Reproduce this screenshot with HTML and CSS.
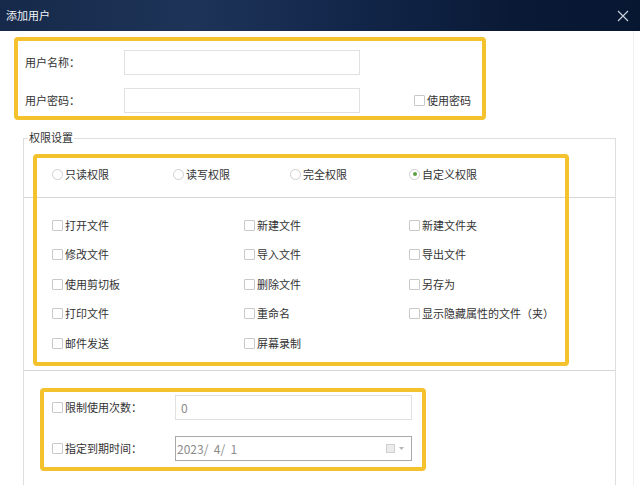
FILE: index.html
```html
<!DOCTYPE html>
<html lang="zh-CN">
<head>
<meta charset="utf-8">
<title>添加用户</title>
<link rel="stylesheet" href="styles.css">
</head>
<body>
<div class="window">
  <div class="titlebar">
    <span class="title">添加用户</span>
    <svg class="close" width="12" height="12" viewBox="0 0 12 12"><path d="M1 1 L11 11 M11 1 L1 11" stroke="#c8d0dc" stroke-width="1.2" fill="none"/></svg>
  </div>
  <div class="body">
    <div class="account hl">
      <span class="lbl">用户名称：</span>
      <div class="input"></div>
      <span></span>
      <span class="lbl">用户密码：</span>
      <div class="input"></div>
      <span class="opt pwd"><i class="cb"></i>使用密码</span>
    </div>

    <div class="group">
      <span class="group-title">权限设置</span>
      <div class="radios">
        <span class="opt"><i class="rd"></i>只读权限</span>
        <span class="opt"><i class="rd"></i>读写权限</span>
        <span class="opt"><i class="rd"></i>完全权限</span>
        <span class="opt"><i class="rd on"></i>自定义权限</span>
      </div>
      <div class="checks">
        <span class="opt"><i class="cb"></i>打开文件</span>
        <span class="opt"><i class="cb"></i>新建文件</span>
        <span class="opt"><i class="cb"></i>新建文件夹</span>
        <span class="opt"><i class="cb"></i>修改文件</span>
        <span class="opt"><i class="cb"></i>导入文件</span>
        <span class="opt"><i class="cb"></i>导出文件</span>
        <span class="opt"><i class="cb"></i>使用剪切板</span>
        <span class="opt"><i class="cb"></i>删除文件</span>
        <span class="opt"><i class="cb"></i>另存为</span>
        <span class="opt"><i class="cb"></i>打印文件</span>
        <span class="opt"><i class="cb"></i>重命名</span>
        <span class="opt"><i class="cb"></i>显示隐藏属性的文件（夹）</span>
        <span class="opt"><i class="cb"></i>邮件发送</span>
        <span class="opt"><i class="cb"></i>屏幕录制</span>
      </div>
      <div class="limits hl">
        <span class="opt"><i class="cb"></i>限制使用次数：</span>
        <div class="input value">0</div>
        <span class="opt"><i class="cb"></i>指定到期时间：</span>
        <div class="input date">
          <span class="value">2023/&nbsp; 4/&nbsp; 1</span>
          <span class="picker"><i class="cal"></i><svg width="5" height="3" viewBox="0 0 5 3"><path d="M0 0 H5 L2.5 3 Z" fill="#b5b5b5"/></svg></span>
        </div>
      </div>
      <div class="hl-overlay"></div>
    </div>
  </div>
</div>
</body>
</html>
```

FILE: styles.css
```css
* { box-sizing: border-box; }
html, body { margin: 0; padding: 0; background: #fff; }
body {
  font-family: "Noto Sans CJK SC", "Noto Sans", sans-serif;
  font-size: 11px;
  line-height: 1;
  color: #333;
}
.window {
  width: 640px;
  height: 485px;
  overflow: hidden;
  background: #fff;
}
.titlebar {
  height: 31px;
  display: flex;
  align-items: center;
  justify-content: space-between;
  padding: 0 11px 0 6px;
  background: linear-gradient(90deg, #16294a 0%, #1d3458 30%, #12264a 55%, #0a1a36 80%, #071631 100%);
}
.title { color: #f2f4f8; font-size: 11px; }
.close { display: block; }

.body {
  position: relative;
  padding-top: 6px;
  height: 454px;
  border-right: 1px solid #f0f0f0;
  margin-right: 6px;
}

.hl { border: 4px solid #f4c22c; border-radius: 4px; }

.account {
  margin-left: 14px;
  width: 472px;
  height: 83px;
  padding: 9px 0 3px 7px;
  display: grid;
  grid-template-columns: 99px 236px auto;
  grid-template-rows: 25px 25px;
  row-gap: 13px;
  align-items: center;
}
.lbl { font-size: 11px; }
.input {
  height: 25px;
  border: 1px solid #e1e1e1;
  background: #fff;
}
.pwd { margin-left: 54px; }

.opt { display: inline-flex; align-items: center; white-space: nowrap; }
.cb {
  display: inline-block;
  width: 11px;
  height: 11px;
  border: 1px solid #c9c9c9;
  border-radius: 1px;
  background: #fff;
  margin-right: 2px;
}
.rd {
  display: inline-block;
  width: 11px;
  height: 11px;
  border: 1px solid #cfcfcf;
  border-radius: 50%;
  background: #fff;
  margin-right: 2px;
  position: relative;
}
.rd.on::after {
  content: "";
  position: absolute;
  left: 2.5px;
  top: 2.5px;
  width: 4px;
  height: 4px;
  border-radius: 50%;
  background: #5f9f45;
}

.group {
  position: relative;
  margin: 18px 0 0 23px;
  width: 593px;
  border: 1px solid #dedede;
  border-bottom: none;
  padding-bottom: 30px;
}
.group-title {
  position: absolute;
  left: 4px;
  top: -7px;
  background: #fff;
  padding: 0 1px;
}
.radios {
  height: 59px;
  padding: 12px 0 0 28px;
  display: grid;
  grid-template-columns: 121px 117px 119px auto;
  align-items: center;
  border-bottom: 1px solid #d6d6d6;
}
.checks {
  padding: 12.25px 0 12.25px 28px;
  display: grid;
  grid-template-columns: 192px 165px auto;
  grid-auto-rows: 29.5px;
  align-items: center;
  border-bottom: 1px solid #d6d6d6;
}
.limits {
  margin: 17px 0 0 16px;
  width: 386px;
  height: 83px;
  padding: 3px 0 6px 8px;
  display: grid;
  grid-template-columns: 123px 237px;
  grid-template-rows: 25px 25px;
  row-gap: 16px;
  align-items: center;
}
.limits .value { font-size: 12px; color: #8c8c8c; }
.input.value {
  display: flex;
  align-items: center;
  padding-left: 5px;
  background: #fff;
}
.input.date {
  border-color: #a9a9a9;
  display: flex;
  align-items: center;
  justify-content: space-between;
  padding: 0 7px 0 1px;
}
.picker { display: flex; align-items: center; gap: 4px; }
.cal {
  display: inline-block;
  width: 9px;
  height: 9px;
  border: 1px solid #cfcfcf;
  background: #ececec;
}
.picker svg { display: block; }

.hl-overlay {
  position: absolute;
  left: 9px;
  top: 15px;
  width: 536px;
  height: 212px;
  border: 4px solid #f4c22c;
  border-radius: 4px;
  pointer-events: none;
}
```
